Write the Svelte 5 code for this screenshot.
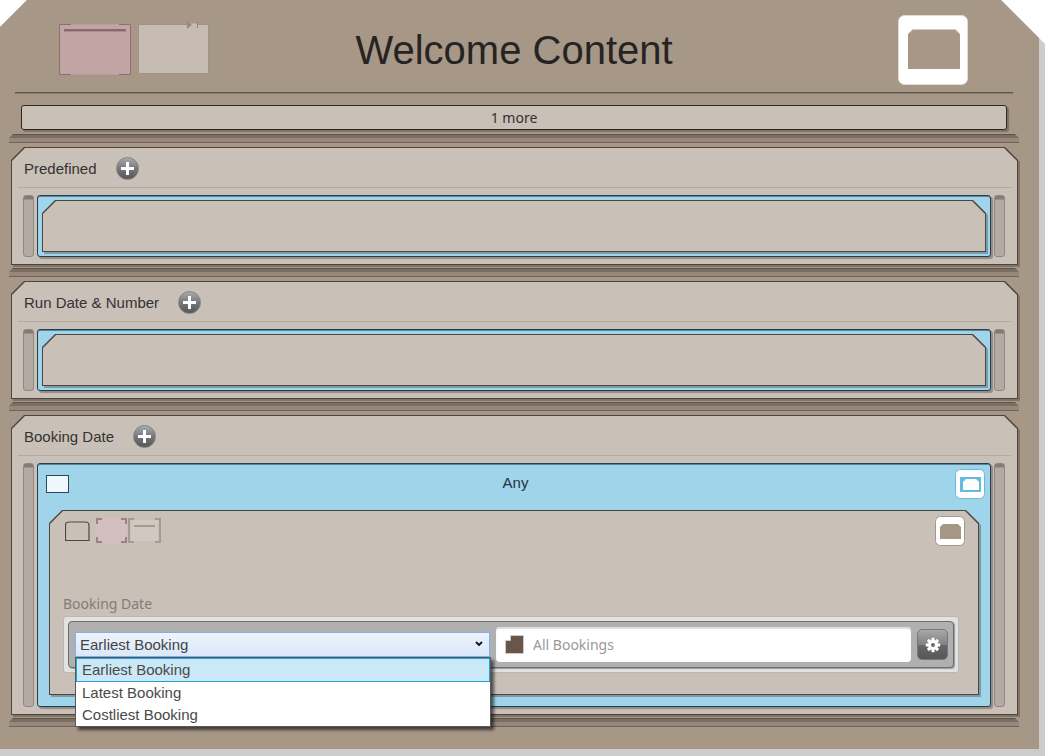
<script>
  let { title = 'Welcome Content' } = $props();

  const emptySections = [
    { id: 'predefined', label: 'Predefined' },
    { id: 'run', label: 'Run Date & Number' }
  ];

  const choices = ['Earliest Booking', 'Latest Booking', 'Costliest Booking'];

  let choice = $state('Earliest Booking');
  let filter = $state('');
  let listOpen = $state(true);
  let anyChecked = $state(false);

  function pick(value) {
    choice = value;
    listOpen = false;
  }
</script>

{#snippet groove()}
  <div class="groove"></div>
{/snippet}

{#snippet sectionHead(label)}
  <header class="section-head">
    <h2>{label}</h2>
    <button class="add" aria-label="Add to {label}">
      <svg viewBox="0 0 13 13" width="13" height="13"><path d="M5 0h3v5h5v3H8v5H5V8H0V5h5z" fill="#fff" /></svg>
    </button>
  </header>
{/snippet}

<div class="page">
  <main class="sheet">
    <header class="top">
      <div class="top-icons">
        <button class="plain" aria-label="Open block">
          <svg width="72" height="52" viewBox="0 0 72 52">
            <rect width="72" height="51" fill="#c1a5a4" />
            <path d="M12 .5H.5v50H12M60 .5h11.5v50H60" fill="none" stroke="#8f6c6d" />
            <path d="M13 .5h46M13 50.5h46" stroke="#b79f9a" />
            <rect x="5" y="5" width="62" height="2" fill="#8a696b" />
            <rect x="5" y="7" width="62" height="1" fill="#a98b8b" />
          </svg>
        </button>
        <button class="plain" aria-label="Closed block">
          <svg width="72" height="52" viewBox="0 0 72 52">
            <rect x=".5" y=".5" width="70" height="49" fill="#c6bcb3" stroke="#9f948a" />
            <path d="M52 .5h8" stroke="#c6bcb3" stroke-width="2" />
            <path d="M49 -3l5 4-5 4z" fill="#958a80" />
            <path d="M59.5 -2v6" stroke="#958a80" />
          </svg>
        </button>
      </div>
      <h1>{title}</h1>
      <button class="plain top-toggle" aria-label="Content window">
        <svg width="70" height="70" viewBox="0 0 70 70">
          <rect x=".5" y=".5" width="69" height="69" rx="6" fill="#fff" stroke="#e2dcd6" />
          <path d="M10 19l5-5h42l5 5v35H10z" fill="#a79787" />
          <path d="M10 19l5-4.5h42l5 4.5" fill="none" stroke="#d4ccc4" />
        </svg>
      </button>
    </header>

    <button class="more">1 more</button>

    {@render groove()}

    {#each emptySections as s (s.id)}
      <section class="chamfer">
        <div class="edge"></div>
        {@render sectionHead(s.label)}
        <div class="track">
          <div class="rail"></div>
          <div class="zone">
            <div class="chamfer slot"><div class="edge"></div></div>
          </div>
          <div class="rail"></div>
        </div>
      </section>
      {@render groove()}
    {/each}

    <section class="chamfer raised">
      <div class="edge"></div>
      {@render sectionHead('Booking Date')}
      <div class="track">
        <div class="rail"></div>
        <div class="zone open">
          <div class="zone-head">
            <input id="any" type="checkbox" bind:checked={anyChecked} />
            <label for="any">Any</label>
            <button class="plain" aria-label="Group window">
              <svg width="30" height="30" viewBox="0 0 30 30">
                <rect x=".5" y=".5" width="29" height="29" rx="5" fill="#fff" stroke="#67b9de" />
                <rect x="5" y="8" width="21" height="15" fill="#67b9de" />
                <path d="M8 13l3-3h10l3 3v8H8z" fill="#fff" />
              </svg>
            </button>
          </div>
          <div class="chamfer card">
            <div class="edge"></div>
            <div class="card-head">
              <svg width="96" height="26" viewBox="0 0 96 26">
                <path d="M.5 22.5V7q0-3 4-3h15.500q4 0 4 3v15.500z" fill="none" stroke="#50463f" stroke-width="1.2" />
                <rect x="31" y="0" width="31" height="25" fill="#d2bfc0" />
                <path d="M37 1h-5v5M56 1h5v5M37 24h-5v-5M56 24h5v-5" fill="none" stroke="#a08084" stroke-width="2" />
                <rect x="66" y="2" width="27" height="21" fill="#d1c8c1" />
                <path d="M69 1h-5v23h5M90 1h5v23h-5M69 8h21" fill="none" stroke="#a79b90" stroke-width="2" />
              </svg>
              <button class="plain" aria-label="Item window">
                <svg width="30" height="30" viewBox="0 0 30 30">
                  <rect x=".5" y=".5" width="29" height="29" rx="5" fill="#fff" stroke="#a79787" />
                  <path d="M5 11l3-3h15l3 3v12H5z" fill="#a79787" />
                </svg>
              </button>
            </div>

            <label class="field-label" for="booking">Booking Date</label>
            <div class="field">
              <div class="field-inner">
                <div class="picker">
                  <select id="booking" bind:value={choice}>
                    {#each choices as c}
                      <option value={c}>{c}</option>
                    {/each}
                  </select>
                  <svg class="caret" width="8" height="6" viewBox="0 0 8 6"><path d="M1 1l3 3 3-3" fill="none" stroke="#111" stroke-width="1.8" /></svg>
                  {#if listOpen}
                    <ul class="list">
                      {#each choices as c}
                        <li><button class:active={c === choice} onclick={() => pick(c)}>{c}</button></li>
                      {/each}
                    </ul>
                  {/if}
                </div>
                <div class="search">
                  <svg width="19" height="19" viewBox="0 0 19 19">
                    <path d="M5.5 .5h13v18H.5v-13h5z" fill="#68564a" stroke="#d8cfc8" stroke-width=".8" />
                  </svg>
                  <input type="text" aria-label="Bookings" placeholder="All Bookings" bind:value={filter} />
                </div>
                <button class="gear" aria-label="Settings">
                  <svg width="16" height="16" viewBox="-8 -8 16 16">
                    <g fill="#fff">
                      {#each [0, 45, 90, 135] as a}
                        <rect x="-1.5" y="-7.2" width="3" height="14.4" transform="rotate({a})" />
                      {/each}
                      <circle r="5" />
                    </g>
                    <circle r="2" fill="#6a6b6d" />
                  </svg>
                </button>
              </div>
            </div>
          </div>
        </div>
        <div class="rail"></div>
      </div>
    </section>

    {@render groove()}
  </main>
</div>

<style>
  :global(body) { margin: 0; background: #fff; }

  .page {
    background: #ccc; padding: 0 6px 7px 0; min-height: 100vh; box-sizing: border-box;
    display: flex; flex-direction: column;
    clip-path: polygon(27px 0, calc(100% - 44px) 0, 100% 44px, 100% 100%, 0 100%, 0 27px);
    font-family: "Liberation Sans", Arial, sans-serif; font-size: 15px; color: #333;
  }

  .sheet { flex: 1; background: #a79787; padding: 0 20px 18px 9px; }

  button { font: inherit; color: inherit; padding: 0; cursor: pointer; }
  svg { display: block; }
  .plain { background: none; border: none; }

  .top {
    display: grid; grid-template-columns: 1fr auto 1fr; align-items: center;
    height: 92px; margin: 0 6px; border-bottom: 1px solid #5d534a; box-shadow: 0 1px #8b7d70;
  }
  .top-icons { display: flex; gap: 7px; padding: 8px 0 0 44px; }
  .top-icons svg { overflow: visible; }
  h1 { margin: 0; padding-top: 8px; font-size: 40px; line-height: 48px; font-weight: 400; color: #262422; }
  .top-toggle { justify-self: end; margin-right: 45px; padding-top: 7px; }

  .more {
    display: block; width: calc(100% - 24px); height: 25px; margin: 12px 12px 4px;
    background: #c9c0b7; border: 1px solid #2c2723; border-radius: 3px;
    box-shadow: 2px 2px 1px #7e7265;
    font-family: "Noto Sans", sans-serif; font-size: 14px; line-height: 24px;
  }

  .groove {
    height: 9px; margin: 3px 0 4px; background: linear-gradient(#5f554c 0 1px, #7a6d62 1px 4px, #96867b 4px 8px, #6f6358 8px);
    clip-path: polygon(4px 0, calc(100% - 4px) 0, 100% 4px, 100% 100%, 0 100%, 0 4px);
  }

  /* cut-corner boxes: the outline is painted by .edge so that lists may hang out */
  .chamfer { position: relative; isolation: isolate; }
  .edge { position: absolute; inset: 0; z-index: -1; filter: drop-shadow(2px 2px 0 rgba(60, 48, 38, 0.35)); }
  .edge::before, .edge::after {
    content: ''; position: absolute;
    clip-path: polygon(13px 0, calc(100% - 13px) 0, 100% 13px, 100% 100%, 0 100%, 0 13px);
  }
  .edge::before { inset: 0; background: #4d4540; }
  .edge::after { inset: 1px; background: #c9c0b7; }

  section.chamfer { margin: 0 1px 0 2px; padding-bottom: 8px; }
  .raised { z-index: 1; }

  .section-head {
    display: flex; align-items: center; gap: 19px; height: 41px; margin: 0 7px; padding: 2px 0 0 6px;
    box-sizing: border-box; border-bottom: 1px solid #b5aaa2;
  }
  h2 { margin: 0; padding-top: 2px; font-size: 15px; line-height: 20px; font-weight: 400; }
  .add {
    display: grid; place-items: center; width: 23px; height: 23px; border-radius: 50%;
    border: 1px solid #85817f; background: linear-gradient(#a9abad, #75777a 50%, #55575a);
  }

  .track { display: flex; gap: 3px; padding: 7px 13px 0 12px; }
  .rail {
    width: 11px; box-sizing: border-box; border: 1px solid #91877f; border-radius: 3px;
    background: linear-gradient(#857b74 0 3px, #b3aaa4 4px);
  }
  .zone {
    flex: 1; min-width: 0; padding: 3px; background: #a0d4eb; border: 1px solid #22404e; border-radius: 3px;
    box-shadow: inset 0 1px #5b8496, 2px 2px 1px #958a81;
  }
  .slot { height: 52px; margin: 1px; }
  .zone.open { padding: 5px 5px 11px; }

  .zone-head { display: grid; grid-template-columns: 1fr auto 1fr; align-items: center; height: 30px; padding-left: 3px; }
  .zone-head .plain { justify-self: end; }
  .zone-head input {
    appearance: none; margin: 0; width: 23px; height: 18px; border: 1px solid #2b4a59;
    background: #edf7fc;
  }
  .zone-head label { color: #234; line-height: 16px; padding-bottom: 2px; }

  .card { margin: 11px 6px 0; padding: 6px 14px 22px; }
  .card-head { display: flex; justify-content: space-between; align-items: flex-start; padding-left: 2px; }
  .card-head > svg { margin-top: 2px; }

  .field-label {
    display: block; margin-top: 48px; font-family: "Noto Sans", sans-serif; font-size: 14px; line-height: 20px; color: #857b75;
  }
  .field { margin: 2px 6px 0 0; padding: 4px; background: #e2e2e1; border: 1px solid #b9b7b5; border-radius: 3px; }
  .field-inner {
    display: grid; grid-template-columns: 1fr 1fr 31px; align-items: center; gap: 6px; padding: 5px 5px 5px 6px;
    background: #b0b0b0; border: 1px solid #6c6c6c; border-radius: 4px; box-shadow: 1px 1px 1px #999;
  }

  .picker { position: relative; min-width: 0; }
  .picker select {
    display: block; appearance: none; width: 100%; height: 25px; padding: 0 4px; box-sizing: border-box;
    border: 1px solid #7eb0ea; border-radius: 0; background: linear-gradient(#edf4fd, #d9e8fa);
    font: inherit; color: #444;
  }
  .caret { position: absolute; right: 7px; top: 9px; pointer-events: none; }
  .list {
    position: absolute; left: 0; right: -1px; top: 100%; z-index: 5; margin: 0; padding: 0; list-style: none;
    background: #fff; border: 1px solid #56595b; box-shadow: 3px 3px 3px rgba(0, 0, 0, 0.6);
  }
  .list button {
    display: block; width: 100%; height: 22px; padding: 0 6px; text-align: left; line-height: 22px;
    background: none; border: none; color: #4a4a4a;
  }
  .list button.active { height: 24px; padding: 0 5px; background: #cae8f6; border: 1px solid #27a0da; }

  .search {
    min-width: 0; display: flex; align-items: center; gap: 9px; height: 35px; padding: 0 9px; box-sizing: border-box;
    background: #fff; border-radius: 4px; box-shadow: inset 0 2px 1px #ddd;
  }
  .search input {
    flex: 1; min-width: 0; padding: 0; border: none; background: none; outline: none;
    font-family: "Noto Sans", sans-serif; font-size: 14px; color: #444;
  }
  .search input::placeholder { color: #999; }

  .gear {
    display: grid; place-items: center; width: 31px; height: 31px; border: 1px solid #77787a; border-radius: 5px;
    background: linear-gradient(#a6a8aa, #808284 50%, #66686a 51%, #555759);
  }
</style>
